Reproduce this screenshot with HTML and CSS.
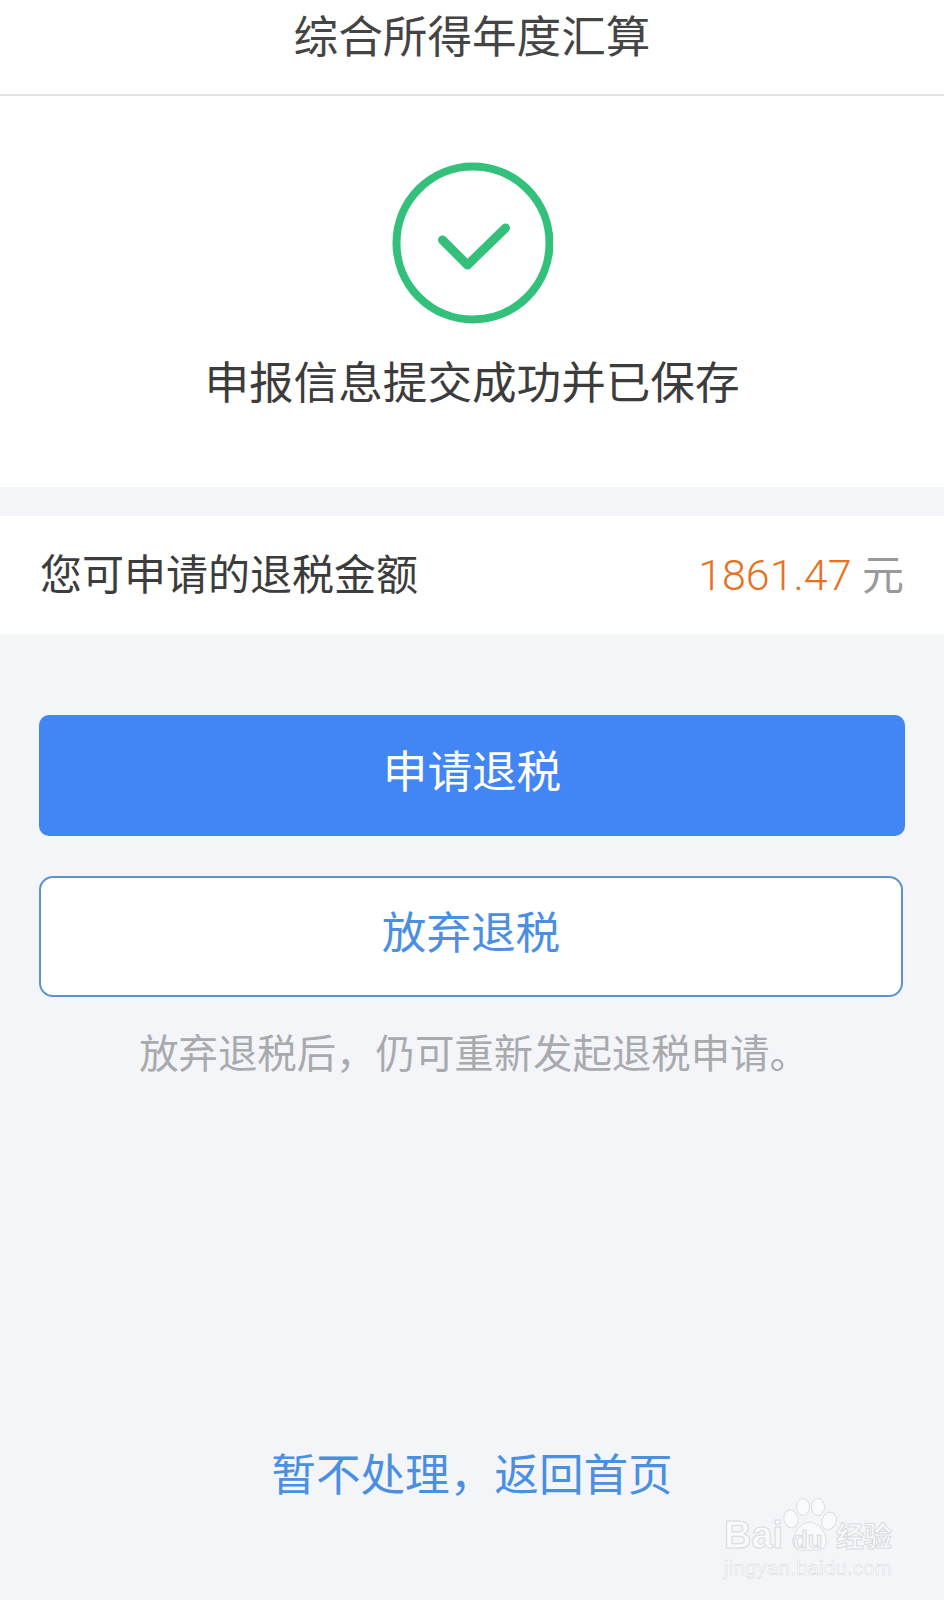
FILE: index.html
```html
<!DOCTYPE html>
<html lang="zh-CN">
<head>
<meta charset="utf-8">
<title>综合所得年度汇算</title>
<link rel="stylesheet" href="styles.css">
</head>
<body>
<div class="page">
  <header class="header">综合所得年度汇算</header>
  <section class="result">
    <svg class="check" viewBox="0 0 162 162" aria-hidden="true">
      <circle cx="82" cy="81" r="76.500" fill="none" stroke="#32c07b" stroke-width="8"/>
      <path d="M51.500 78 L76.500 103 L114.500 66" fill="none" stroke="#32c07b" stroke-width="9" stroke-linecap="round" stroke-linejoin="round"/>
    </svg>
    <p class="result-text">申报信息提交成功并已保存</p>
  </section>
  <section class="amount-row">
    <span class="amount-label">您可申请的退税金额</span>
    <span class="amount-value"><span class="amount-num">1861.47</span> <span class="amount-unit">元</span></span>
  </section>
  <div class="actions">
    <div class="btn btn-primary">申请退税</div>
    <div class="btn btn-outline">放弃退税</div>
    <p class="hint">放弃退税后，仍可重新发起退税申请。</p>
  </div>
  <div class="home-link">暂不处理，返回首页</div>
  <div class="watermark" aria-hidden="true">
    <svg class="paw" viewBox="0 0 56 56">
      <g fill="#f9fafc" stroke="#dcdee3" stroke-width="1">
        <ellipse cx="9" cy="21" rx="7" ry="9" transform="rotate(-15 9 21)"/>
        <ellipse cx="21" cy="9" rx="6.500" ry="8.500"/>
        <ellipse cx="36" cy="9" rx="6.500" ry="8.500"/>
        <ellipse cx="47" cy="23" rx="7" ry="9" transform="rotate(20 47 23)"/>
        <path d="M28 24 C38 24 46 38 44 46 C42 54 34 52 28 52 C22 52 13 55 11 46 C9 38 18 24 28 24Z"/>
      </g>
    </svg>
    <span class="wm-du">du</span>
    <span class="wm-bai">Bai</span>
    <span class="wm-cn">经验</span>
    <span class="wm-url">jingyan.baidu.com</span>
  </div>
</div>
</body>
</html>
```
FILE: styles.css
```css
* { box-sizing: border-box; margin: 0; padding: 0; }
html, body { width: 944px; height: 1600px; overflow: hidden; }
body {
  background: #f3f5f9;
  font-family: "Roboto", "Noto Sans CJK SC", sans-serif;
  font-weight: 400;
}
.page { position: relative; display: flex; flex-direction: column; height: 1600px; }
.header {
  height: 96px;
  padding-top: 2px;
  background: #fff;
  border-bottom: 2px solid #e4e4e6;
  color: #444;
  font-size: 44.600px;
  line-height: 72px;
  text-align: center;
}
.result {
  height: 391px;
  background: #fff;
  display: flex;
  flex-direction: column;
  align-items: center;
  padding-top: 66px;
}
.check { width: 162px; height: 162px; display: block; }
.result-text {
  margin-top: 28px;
  color: #3c3c3c;
  font-size: 44.600px;
  line-height: 64px;
}
.amount-row {
  margin-top: 29px;
  height: 118px;
  background: #fff;
  display: flex;
  justify-content: space-between;
  align-items: center;
  padding: 0 40px 7px;
}
.amount-label { color: #3c3c3c; font-size: 42px; }
.amount-value { font-size: 42px; position: relative; }
.amount-num { color: #e8701f; font-weight: 300; font-size: 43px; }
.amount-unit { color: #999; }
.actions { padding: 81px 39px 0; display: flex; flex-direction: column; }
.btn {
  height: 121px;
  border-radius: 10px;
  font-size: 44.600px;
  text-align: center;
  line-height: 116px;
}
.btn-primary { background: #4285f4; color: #fff; }
.btn-outline {
  margin-top: 40px;
  margin-right: 2px;
  background: #fff;
  border: 2px solid #5f93cf;
  border-radius: 14px;
  color: #4a8fe2;
  line-height: 112px;
}
.hint {
  margin-top: 30px;
  padding-left: 4px;
  color: #a8aaae;
  font-size: 39.400px;
  line-height: 56px;
  text-align: center;
}
.home-link {
  position: absolute;
  left: 0;
  right: 0;
  top: 1444px;
  color: #4a8fe2;
  font-size: 44.600px;
  line-height: 64px;
  text-align: center;
}
.watermark { position: absolute; left: 724px; top: 1498px; width: 170px; height: 84px; color: #f9fafc; }
.paw { position: absolute; left: 58px; top: 0; width: 56px; height: 56px; }
.wm-du, .wm-bai, .wm-cn, .wm-url {
  position: absolute;
  font-family: "Liberation Sans", "Noto Sans CJK SC", sans-serif;
  -webkit-text-stroke: 1px #d9dbe0;
  font-weight: 700;
}
.wm-bai { left: 0; top: 15px; font-size: 38px; line-height: 44px; }
.wm-du { left: 69px; top: 28px; font-size: 24px; line-height: 28px; color: #f3f5f9; }
.wm-cn { left: 112px; top: 22px; font-size: 28px; line-height: 36px; }
.wm-url { left: 0; top: 58px; font-size: 20px; line-height: 24px; font-weight: 400; letter-spacing: 0.400px; -webkit-text-stroke: 0.500px #d9dbe0; }
```
